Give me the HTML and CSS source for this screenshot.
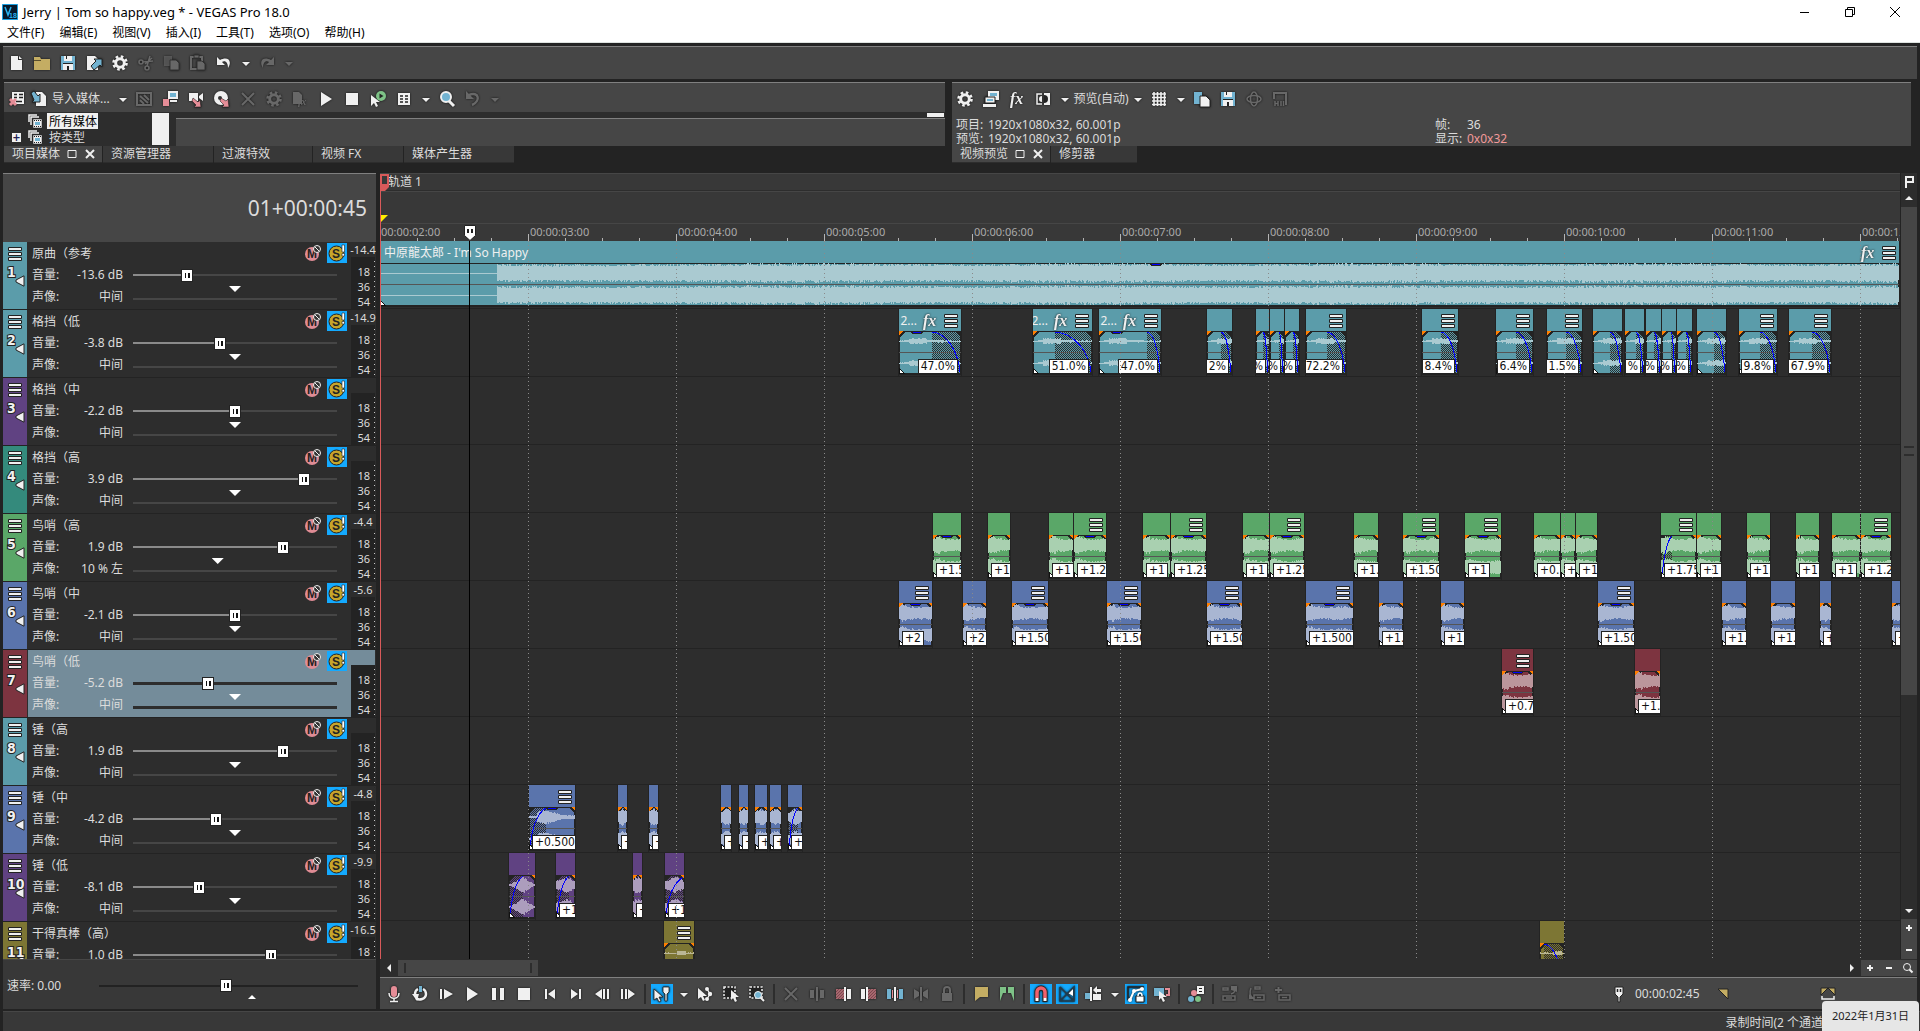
FILE: index.html
```html
<!DOCTYPE html>
<html lang="zh-CN">
<head>
<meta charset="utf-8">
<title>Jerry | Tom so happy.veg * - VEGAS Pro 18.0</title>
<link rel="stylesheet" href="styles.css">
</head>
<body>
<svg class="sprite" aria-hidden="true">
  <symbol id="new" viewBox="0 0 18 18"><path fill="currentColor" d="M4 2h7v4h4v10H4z"/><path fill="currentColor" d="M12 2l3 3h-3z"/></symbol>
  <symbol id="folder" viewBox="0 0 18 18"><path fill="#c4ad63" d="M1 3h6l1 2h9v11H1z"/><path stroke="#5a4f2c" d="M1 6.500h7"/></symbol>
  <symbol id="save" viewBox="0 0 18 18"><path fill="#72b3d1" d="M2 2h14v14H2z"/><path fill="#f0f0f0" d="M5 2h8v5H5zM4 10h10v6H4z"/><path fill="#222" d="M7 2h1v3H7zM8 12h2v4H8zM4 9h10v1H4z"/></symbol>
  <symbol id="render" viewBox="0 0 18 18"><path fill="#f0f0f0" d="M2 2h8l3 3v11H2z"/><path fill="#72b3d1" stroke="#222" d="M6 12l5-5-2-2h8v8l-2-2-6 5z"/></symbol>
  <symbol id="gear" viewBox="0 0 18 18"><circle cx="9" cy="9" r="4.300" fill="none" stroke="currentColor" stroke-width="3"/><circle cx="9" cy="9" r="6.500" fill="none" stroke="currentColor" stroke-width="2.600" stroke-dasharray="2.600 2.500"/></symbol>
  <symbol id="cut" viewBox="0 0 18 18"><g fill="none" stroke="currentColor" stroke-width="1.600"><circle cx="4" cy="8" r="2"/><circle cx="10" cy="14" r="2"/><path d="M6 8l10-1M10 12l3-10M8 10l7-6"/></g></symbol>
  <symbol id="copy" viewBox="0 0 18 18"><path fill="currentColor" opacity=".7" d="M1 2h8v10H1z"/><path fill="currentColor" stroke="#333" d="M7 6h6l3 3v7H7z"/></symbol>
  <symbol id="paste" viewBox="0 0 18 18"><path fill="none" stroke="currentColor" stroke-width="2" d="M2 3h11v12H2z"/><path fill="currentColor" stroke="#333" d="M8 7h5l3 3v6H8zM5 1h5v3H5z"/></symbol>
  <symbol id="undo" viewBox="0 0 18 18"><path fill="currentColor" d="M2 3v8h8L7 8c3-2 6 0 6 6 5-8-1-12-8-8z"/></symbol>
  <symbol id="redo" viewBox="0 0 18 18"><path fill="currentColor" d="M16 3v8H8l3-3c-3-2-6 0-6 6-5-8 1-12 8-8z"/></symbol>
  <symbol id="caret" viewBox="0 0 18 18"><path fill="currentColor" d="M5 8h8l-4 4z"/></symbol>
  <symbol id="offline" viewBox="0 0 18 18"><path fill="#f0f0f0" d="M4 2h12v12H4z"/><path stroke="#222" stroke-width="1.500" d="M6 4.500h3M11 4.500h4M6 7.500h3M11 7.500h4M8 11.500h6"/><path stroke="#e58d97" stroke-width="3" d="M2 9l6 6M8 9l-6 6"/></symbol>
  <symbol id="import" viewBox="0 0 18 18"><path fill="#f0f0f0" d="M6 2h6l4 4v10H6z"/><path fill="#72b3d1" stroke="#222" d="M1 3l3-2 4 5 2-2v8H2l2-2z"/></symbol>
  <symbol id="capture" viewBox="0 0 18 18"><path fill="none" stroke="currentColor" stroke-width="2" d="M2 3h14v12H2z"/><path stroke="currentColor" stroke-width="2" d="M5 6l8 7M9 5l5 5M5 10l4 4"/></symbol>
  <symbol id="screens" viewBox="0 0 18 18"><path fill="#72b3d1" stroke="#f0f0f0" stroke-width="2" d="M8 2h8v6H8z"/><path fill="#f0f0f0" d="M9 10h7v2H9z"/><path fill="#e58d97" d="M2 9h6v7H2z"/></symbol>
  <symbol id="camera" viewBox="0 0 18 18"><path fill="#f0f0f0" d="M2 3h9v8H2zM12 6l4-3v8l-4-3z"/><path fill="#e58d97" stroke="#222" stroke-width=".6" d="M6 8l5 4 2-2 1 7H7l2-2-4-4z"/></symbol>
  <symbol id="disc" viewBox="0 0 18 18"><circle cx="8" cy="8" r="7" fill="#f0f0f0"/><circle cx="7" cy="8" r="2" fill="#333"/><path fill="#e58d97" stroke="#222" stroke-width=".6" d="M8 8l5 3 2-2 1 8H9l2-2-4-4z"/></symbol>
  <symbol id="cross" viewBox="0 0 18 18"><path stroke="currentColor" stroke-width="2" d="M3 3l12 12M15 3L3 15"/></symbol>
  <symbol id="docfx" viewBox="0 0 18 18"><path fill="currentColor" d="M2 2h6l3 3v9H2z"/><text x="7" y="15" class="glyph">fx</text></symbol>
  <symbol id="play" viewBox="0 0 18 18"><path fill="currentColor" d="M4 2l11 7-11 7z"/></symbol>
  <symbol id="stop" viewBox="0 0 18 18"><path fill="currentColor" d="M3 3h12v12H3z"/></symbol>
  <symbol id="autoplay" viewBox="0 0 18 18"><path fill="#f0f0f0" d="M2 5v11l3-3 2 4 2-1-2-4h4z"/><circle cx="12" cy="6" r="5" fill="#7ec287"/><path fill="#222" d="M10.500 3.500l4 2.500-4 2.500z"/></symbol>
  <symbol id="views" viewBox="0 0 18 18"><path fill="currentColor" d="M3 3h12v12H3z"/><path stroke="#222" stroke-width="1.600" d="M5 6h3M10 6h3M5 9h3M10 9h3M5 12h3M10 12h3"/></symbol>
  <symbol id="search" viewBox="0 0 18 18"><path stroke="#f0f0f0" stroke-width="3" d="M11 11l5 5"/><circle cx="8" cy="7" r="5" fill="#72b3d1" stroke="#f0f0f0" stroke-width="2"/></symbol>
  <symbol id="revert" viewBox="0 0 18 18"><path fill="none" stroke="currentColor" stroke-width="2.500" d="M5 5c10-4 12 6 3 10"/><path fill="currentColor" d="M2 1v8h8z"/></symbol>
  <symbol id="monitor" viewBox="0 0 18 18"><path fill="#f0f0f0" d="M6 1h11v9H6z"/><path fill="#72b3d1" d="M8 3h7v3H8z"/><path fill="#f0f0f0" stroke="#222" d="M3 7h10v6H3z"/><path fill="#72b3d1" d="M5 9h6v2H5z"/><path fill="#f0f0f0" d="M1 14h13v3H1z"/></symbol>
  <symbol id="fx" viewBox="0 0 18 18"><text x="2" y="14" class="glyph big">fx</text></symbol>
  <symbol id="split" viewBox="0 0 18 18"><path fill="#f0f0f0" d="M10 3h6v12h-6z"/><path fill="none" stroke="#f0f0f0" stroke-width="1.500" d="M8 4H3v10h5"/><path fill="#f0f0f0" d="M8 6v6a3 3 0 010-6z"/><path fill="#222" d="M10 5v8a4 4 0 000-8z"/></symbol>
  <symbol id="grid" viewBox="0 0 18 18"><path stroke="currentColor" stroke-width="1.600" d="M4 2v14M7.500 2v14M11 2v14M14.500 2v14M2 4h14M2 7.500h14M2 11h14M2 14.500h14"/></symbol>
  <symbol id="snap" viewBox="0 0 18 18"><path fill="#72b3d1" d="M1 2h8v12H1z"/><path fill="#f0f0f0" stroke="#222" d="M7 6h6l4 4v7H7z"/></symbol>
  <symbol id="vr" viewBox="0 0 18 18"><g fill="none" stroke="currentColor" stroke-width="1.600"><ellipse cx="9" cy="9" rx="7" ry="3.500"/><ellipse cx="9" cy="9" rx="3.500" ry="7"/></g></symbol>
  <symbol id="hdr" viewBox="0 0 18 18"><path fill="none" stroke="currentColor" stroke-width="2" d="M3 9V3h12v12"/><path stroke="currentColor" stroke-width="1.500" d="M4 11v5M7 11v5M10 11v5M12.500 11v5M4 13.500h3"/></symbol>
  <symbol id="mic" viewBox="0 0 18 18"><path fill="none" stroke="#f0f0f0" stroke-width="1.500" d="M4 8c0 7 10 7 10 0M9 13v4M5 16.500h8"/><rect x="6" y="1" width="6" height="11" rx="3" fill="#e58d97"/></symbol>
  <symbol id="loop" viewBox="0 0 18 18"><path fill="none" stroke="#f0f0f0" stroke-width="2.500" d="M5 13c3 3 10 1 10-4 0-2-1-4-3-5M4 9c0-3 1-4 3-5"/><path fill="#f0f0f0" d="M1 9h7l-2 7z"/><path fill="#72b3d1" d="M8 1h3v6H8z"/></symbol>
  <symbol id="playstart" viewBox="0 0 18 18"><path fill="currentColor" d="M3 4h2v10H3zM7 4l9 5-9 5z"/></symbol>
  <symbol id="pause" viewBox="0 0 18 18"><path fill="currentColor" d="M3 3h4v12H3zM11 3h4v12h-4z"/></symbol>
  <symbol id="first" viewBox="0 0 18 18"><path fill="currentColor" d="M4 4h2v10H4zM14 4v10L7 9z"/></symbol>
  <symbol id="last" viewBox="0 0 18 18"><path fill="currentColor" d="M12 4h2v10h-2zM4 4v10l7-5z"/></symbol>
  <symbol id="back" viewBox="0 0 18 18"><path fill="currentColor" d="M9 4v10L2 9zM10 4h2v10h-2zM14 4h2v10h-2z"/></symbol>
  <symbol id="fwd" viewBox="0 0 18 18"><path fill="currentColor" d="M9 4v10l7-5zM2 4h2v10H2zM6 4h2v10H6z"/></symbol>
  <symbol id="edit" viewBox="0 0 18 18"><path fill="#f0f0f0" stroke="#222" stroke-width=".8" d="M1 4v11l3-2 2 4 2-1-2-4h4zM10 2h6v5l-2 2v7h-2V9l-2-2z"/></symbol>
  <symbol id="env" viewBox="0 0 18 18"><path fill="#f0f0f0" d="M2 3v11l3-2 2 4 2-1-2-4h4z"/><path fill="none" stroke="#f0f0f0" stroke-width="1.300" d="M11 4l3 5-3 5"/><g fill="#f0f0f0"><circle cx="11" cy="4" r="2"/><circle cx="14" cy="9" r="2.200"/><circle cx="11" cy="14" r="2"/></g></symbol>
  <symbol id="select" viewBox="0 0 18 18"><path fill="#222" stroke="#f0f0f0" stroke-width="1.500" stroke-dasharray="2 1.500" d="M2 2h11v11H2z"/><path fill="#f0f0f0" d="M9 5v10l2-2 2 4 2-1-2-4h4z"/></symbol>
  <symbol id="zoomtool" viewBox="0 0 18 18"><path fill="#222" stroke="#f0f0f0" stroke-width="1.500" stroke-dasharray="2 1.500" d="M2 2h12v11H2z"/><path stroke="#f0f0f0" stroke-width="2" d="M12 12l4 4"/><circle cx="10" cy="10" r="3.500" fill="#72b3d1" stroke="#f0f0f0"/></symbol>
  <symbol id="trim" viewBox="0 0 18 18"><path fill="currentColor" d="M2 5h4v8H2zM12 5h4v8h-4zM8 2h2v14H8z"/></symbol>
  <symbol id="trimstart" viewBox="0 0 18 18"><path fill="#a8676f" d="M2 4h8v10H2z"/><path stroke="#6d4045" stroke-width=".8" d="M2 7l3-3M2 10l6-6M2 13l8-8M4 14l6-6M7 14l3-3"/><path fill="#f0f0f0" d="M10 2h2v14h-2zM13 4h4v10h-4z"/></symbol>
  <symbol id="trimend" viewBox="0 0 18 18"><path fill="#a8676f" d="M8 4h8v10H8z"/><path stroke="#6d4045" stroke-width=".8" d="M8 7l3-3M8 10l6-6M8 13l8-8M10 14l6-6M13 14l3-3"/><path fill="#f0f0f0" d="M6 2h2v14H6zM1 4h4v10H1z"/></symbol>
  <symbol id="splitev" viewBox="0 0 18 18"><path fill="#72b3d1" d="M1 4h4v10H1zM13 4h4v10h-4z"/><path fill="#e58d97" d="M6 5h1v8H6zM11 5h1v8h-1z"/><path fill="#f0f0f0" d="M8 2h2v14H8z"/></symbol>
  <symbol id="mirror" viewBox="0 0 18 18"><path fill="currentColor" d="M2 4l5 3v4l-5 3zM16 4l-5 3v4l5 3zM8 2h2v14H8z"/></symbol>
  <symbol id="lock" viewBox="0 0 18 18"><path fill="none" stroke="currentColor" stroke-width="2" d="M6 9V5a3 3 0 016 0v4"/><path fill="currentColor" d="M4 8h10v8H4z"/></symbol>
  <symbol id="marker" viewBox="0 0 18 18"><path fill="#c4ad63" d="M3 2h13v10H8l-5 4z"/></symbol>
  <symbol id="region" viewBox="0 0 18 18"><path fill="#7ec287" d="M2 2h6v6H5l-3 8zM10 2h6v14l-3-8h-3z"/></symbol>
  <symbol id="magnet" viewBox="0 0 18 18"><path fill="none" stroke="#222" stroke-width="5" d="M5 17V7a4 4 0 018 0v10"/><path fill="none" stroke="#f0616d" stroke-width="3.500" d="M5 13V7a4 4 0 018 0v6"/><path stroke="#fff" stroke-width="3" d="M5 13v3M13 13v3"/></symbol>
  <symbol id="xfade" viewBox="0 0 18 18"><path fill="#fff" d="M15 3v8l-5-3z"/><path fill="none" stroke="#223a4a" stroke-width="1.500" d="M2 2v14h14V2L2 16M2 2l14 14"/></symbol>
  <symbol id="ripple" viewBox="0 0 18 18"><path fill="#72b3d1" d="M1 8h5v6H1z"/><path fill="#f0f0f0" d="M6 2h2v14H6zM9 9h8v6H9zM9 5l4-4v3h4v3h-4v2z"/></symbol>
  <symbol id="envlock" viewBox="0 0 18 18"><path fill="none" stroke="#222" stroke-width="1.500" d="M1 15V2h16"/><path fill="none" stroke="#fff" stroke-width="2" d="M3 15L7 6l8-2"/><g fill="#fff"><circle cx="3" cy="15" r="2"/><circle cx="7" cy="6" r="2"/><circle cx="15" cy="4" r="2"/><path stroke="#222" d="M9 11h8v6H9z"/></g><path fill="none" stroke="#fff" stroke-width="1.500" d="M11 11c0-4 4-4 4 0"/></symbol>
  <symbol id="group" viewBox="0 0 18 18"><path fill="#72b3d1" d="M1 3h10v8H1z"/><path fill="none" stroke="#e58d97" stroke-width="2" d="M12 4h4v6h-3"/><path fill="#f0f0f0" d="M6 6v9l2-2 2 4 2-1-2-4h4z"/></symbol>
  <symbol id="mixer" viewBox="0 0 18 18"><path fill="#f0f0f0" d="M10 1h7v8h-7z"/><path stroke="#222" d="M12 3.500h3M12 6.500h3"/><circle cx="7" cy="8" r="3" fill="#e58d97"/><circle cx="4" cy="14" r="3" fill="#72b3d1"/><circle cx="11" cy="14" r="3" fill="#7ec287"/></symbol>
  <symbol id="sync" viewBox="0 0 18 18"><path fill="none" stroke="currentColor" stroke-width="1.500" d="M2 3h5v2H2zM2 11h12v4H2zM5 13h6M10 9c3-1 4-2 4-6"/><path fill="currentColor" d="M10 5V1h6v6z"/></symbol>
  <symbol id="sync2" viewBox="0 0 18 18"><path fill="none" stroke="currentColor" stroke-width="1.500" d="M4 3C2 8 3 11 6 13M8 2h5v2H8zM7 10h10v5H7zM10 12.500h4"/><path fill="currentColor" d="M2 14V9l6 5z"/></symbol>
  <symbol id="sync3" viewBox="0 0 18 18"><path fill="none" stroke="currentColor" stroke-width="2" d="M2 5h7M5.500 2v6"/><path fill="none" stroke="currentColor" stroke-width="1.500" d="M6 10h11v5H6zM9 12.500h5"/></symbol>
  <symbol id="bars" viewBox="0 0 16 16"><path fill="#f0f0f0" stroke="#222" d="M1.500 1.500h13v3h-13zM1.500 6.500h13v3h-13zM1.500 11.500h13v3h-13z"/></symbol>
  <symbol id="media" viewBox="0 0 16 16"><path fill="none" stroke="#f0f0f0" stroke-width="1.500" d="M2 9V2h8M4 12V4h8"/><path fill="#f0f0f0" stroke="#222" stroke-width=".5" d="M6 6h9v9H6z"/><path fill="#72b3d1" d="M8 9h5v3H8z"/><path stroke="#222" stroke-dasharray="1 1" d="M7 7.500h7M7 13.500h7"/></symbol>
  <symbol id="speaker" viewBox="0 0 10 12"><path fill="#f0f0f0" stroke="#222" d="M9 .8v10.400L1 7V5z"/></symbol>
  <symbol id="mute" viewBox="0 0 18 18"><circle cx="8" cy="10" r="7" fill="#df8c95"/><text x="3" y="14" class="letter">M</text><circle cx="13" cy="5" r="3.500" fill="#333" stroke="#f0f0f0"/><path stroke="#f0f0f0" d="M11 3l4 4"/></symbol>
  <symbol id="solo" viewBox="0 0 18 18"><circle cx="8.500" cy="9.500" r="7.500" fill="#c7a52a" stroke="#222"/><text x="4" y="14" class="letter">S</text><path fill="#fff" stroke="#222" stroke-width=".6" d="M14 1h2.500v7H14zM14 9.500h2.500V12H14z"/></symbol>
  <symbol id="needle" viewBox="0 0 18 18"><path fill="#f0f0f0" stroke="#222" d="M5 2h8v7l-3 3v5H8v-5L5 9z"/><path stroke="#222" stroke-width="1.500" d="M7.500 4v3M10.500 4v3"/></symbol>
  <symbol id="corner" viewBox="0 0 18 18"><path fill="#c4ad63" stroke="#222" d="M4 4h10v10z"/></symbol>
  <symbol id="length" viewBox="0 0 18 18"><path fill="#c4ad63" stroke="#222" d="M2 3h7l-7 7zM16 3H9l7 7z"/><path fill="none" stroke="#f0f0f0" stroke-width="1.500" d="M3 11v3h12v-3"/></symbol>
  <symbol id="left" viewBox="0 0 18 18"><path fill="currentColor" d="M11 5v8L7 9z"/></symbol>
  <symbol id="right" viewBox="0 0 18 18"><path fill="currentColor" d="M7 5v8l4-4z"/></symbol>
  <symbol id="up" viewBox="0 0 18 18"><path fill="currentColor" d="M5 11h8L9 7z"/></symbol>
  <symbol id="plus" viewBox="0 0 18 18"><path stroke="currentColor" stroke-width="2" d="M6 9h6M9 6v6"/></symbol>
  <symbol id="minus" viewBox="0 0 18 18"><path stroke="currentColor" stroke-width="2" d="M6 9h6"/></symbol>
  <symbol id="lens" viewBox="0 0 18 18"><circle cx="8" cy="8" r="3.500" fill="none" stroke="currentColor"/><path stroke="currentColor" stroke-width="2" d="M10.500 10.500l3 3"/></symbol>
  <symbol id="flag" viewBox="0 0 18 18"><path fill="none" stroke="currentColor" stroke-width="2" d="M6 15V4h7v5H6"/></symbol>
</svg>

<header class="titlebar">
  <svg class="logo" viewBox="0 0 16 16"><path fill="#06192b" stroke="#1b9fe0" d="M.5.500h15v15H.5z"/><path fill="none" stroke="#29b3f0" stroke-width="1.500" d="M3 3l3 8 3-8"/><text x="7" y="14" class="logo-num">18</text></svg>
  <h1>Jerry | Tom so happy.veg * - VEGAS Pro 18.0</h1>
  <div class="window-buttons">
    <button aria-label="最小化"><svg viewBox="0 0 12 12"><path d="M1 6.500h9"/></svg></button>
    <button aria-label="还原"><svg viewBox="0 0 12 12"><path d="M1.500 3.500h7v7h-7zM3.500 3.500v-2h7v7h-2"/></svg></button>
    <button aria-label="关闭"><svg viewBox="0 0 12 12"><path d="M1 1l10 10M11 1L1 11"/></svg></button>
  </div>
</header>
<nav class="menubar">
  <button>文件(F)</button><button>编辑(E)</button><button>视图(V)</button><button>插入(I)</button><button>工具(T)</button><button>选项(O)</button><button>帮助(H)</button>
</nav>

<div class="bar main-bar" data-icons="new folder save render gear cut! copy! paste! undo caret redo! caret!"></div>

<section class="docks">
  <div class="dock">
    <div class="panel">
      <div class="bar media-bar">
        <span class="icons" data-icons="offline import"></span>
        <button class="text">导入媒体...</button>
        <span class="icons" data-icons="caret capture! screens camera disc cross! gear! docfx! play stop autoplay views caret search revert! caret!"></span>
      </div>
      <div class="media">
        <ul class="tree">
          <li><i></i><svg><use href="#media"/></svg><b>所有媒体</b></li>
          <li><i class="box">+</i><svg><use href="#media"/></svg><span>按类型</span></li>
        </ul>
        <div class="tree-thumb"></div>
        <div class="media-view"><span></span></div>
      </div>
    </div>
    <div class="tabs">
      <button class="tab on">项目媒体<svg viewBox="0 0 32 12"><path d="M2 2.500h8v7H2z"/><path class="x" d="M20 2l8 8M28 2l-8 8"/></svg></button>
      <button class="tab w110">资源管理器</button><button class="tab w98">过渡特效</button><button class="tab w90">视频 FX</button><button class="tab w110">媒体产生器</button>
    </div>
  </div>
  <div class="dock">
    <div class="panel">
      <div class="bar preview-bar">
        <span class="icons" data-icons="gear monitor fx split caret"></span>
        <button class="text">预览(自动)</button>
        <span class="icons" data-icons="caret grid caret snap save vr! hdr!"></span>
      </div>
      <div class="info">
        <dl><dt>项目:</dt><dd>1920x1080x32, 60.001p</dd><dt>预览:</dt><dd>1920x1080x32, 60.001p</dd></dl>
        <dl><dt>帧:</dt><dd>36</dd><dt>显示:</dt><dd class="warn">0x0x32</dd></dl>
      </div>
    </div>
    <div class="tabs">
      <button class="tab on">视频预览<svg viewBox="0 0 32 12"><path d="M2 2.500h8v7H2z"/><path class="x" d="M20 2l8 8M28 2l-8 8"/></svg></button>
      <button class="tab w86">修剪器</button>
    </div>
  </div>
</section>

<main class="editor">
  <section class="control">
    <div class="clock">01+00:00:45</div>
    <div class="tracks" id="tracks"></div>
    <div class="rate">
      <label for="rate">速率: 0.00</label>
      <input id="rate" type="range" min="0" max="100" value="49">
      <svg class="center"><use href="#up"/></svg>
    </div>
  </section>
  <section class="timeline">
    <div class="canvas">
      <div class="marker-bar"><svg class="flag" viewBox="0 0 9 17"><path fill="#383838" stroke="#d85a5a" stroke-width="2" d="M1 1h7v10H1z"/><path fill="#d85a5a" d="M0 11h9v2l-4 4H0z"/></svg>轨道 1</div>
      <div class="region-bar"><svg viewBox="0 0 8 8"><path fill="#ffee00" d="M0 0h8L0 8z"/></svg></div>
      <div class="ruler" id="ruler"></div>
      <div class="lanes" id="lanes"></div>
      <svg class="playhead" viewBox="0 0 12 16"><path fill="#fff" stroke="#222" d="M.5.500h11v10L6 15.500.5 10.500z"/><path stroke="#222" stroke-width="2" d="M4 4v4M8 4v4"/></svg>
      <div class="playline"></div>
      <div class="start-line"></div>
    </div>
    <div class="vscroll">
      <button class="flag-button" aria-label="标记"><svg><use href="#flag"/></svg></button>
      <svg><use href="#up"/></svg>
      <div class="vthumb"></div>
      <svg><use href="#caret"/></svg>
      <div class="vzoom"><svg><use href="#plus"/></svg><svg><use href="#minus"/></svg></div>
    </div>
    <div class="hscroll">
      <svg><use href="#left"/></svg><div class="hthumb"></div>
      <svg class="end"><use href="#right"/></svg>
      <div class="hzoom"><svg><use href="#plus"/></svg><svg><use href="#minus"/></svg><svg><use href="#lens"/></svg></div>
    </div>
    <div class="bar transport">
      <span class="icons" data-icons="mic loop playstart play pause stop first last back fwd | edit* caret env select zoomtool | cross! trim! trimstart trimend splitev mirror! lock! | marker region | magnet* xfade* ripple caret envlock* group | mixer | sync! sync2! sync3!"></span>
      <span class="position"><svg><use href="#needle"/></svg><span class="time">00:00:02:45</span><svg><use href="#corner"/></svg><svg class="len"><use href="#length"/></svg></span>
    </div>
  </section>
</main>
<footer class="status"><span>录制时间(2 个通道</span></footer>
<div class="tip" role="tooltip">2022年1月31日</div>
<script src="app.js"></script>
</body>
</html>
```
FILE: styles.css
```css
* { box-sizing: border-box; }
body {
  margin: 0; height: 100vh; overflow: hidden; display: flex; flex-direction: column;
  background: #232323; color: #dcdcdc;
  font: 12px/16px "Noto Sans", "Noto Sans CJK SC", sans-serif;
}
button { border: 0; padding: 0; background: none; color: inherit; font: inherit; white-space: nowrap; }
.sprite { display: none; }
.glyph { font: italic 700 10px "Liberation Serif", serif; fill: currentColor; }
.glyph.big { font-size: 16px; }
.letter { font: 700 12px "Liberation Sans", sans-serif; fill: #222; }

.titlebar { flex: none; display: flex; align-items: center; height: 23px; padding-left: 2px; background: #fff; color: #000; }
.logo { width: 16px; height: 16px; margin-right: 5px; }
.logo-num { font: 700 7px "Liberation Sans", sans-serif; fill: #29b3f0; }
.titlebar h1 { margin: 0; flex: 1; font-size: 13px; font-weight: 400; }
.window-buttons { display: flex; padding-right: 3px; }
.window-buttons button { width: 45px; height: 20px; display: grid; place-items: center; }
.window-buttons svg { width: 12px; height: 12px; fill: none; stroke: #000; }
.menubar { flex: none; display: flex; gap: 15px; height: 20px; padding: 0 7px; background: #fff; color: #000; border-bottom: 1px solid #dde3e0; }

.bar { display: flex; align-items: center; background: #464646; border-top: 1px solid #808080; }
.icons { display: flex; align-items: center; }
.icon { flex: none; width: 26px; height: 26px; display: grid; place-items: center; color: #f0f0f0; }
.icon svg { width: 18px; height: 18px; filter: drop-shadow(0 0 1px #111); }
.icon.off { color: #686868; }
.icon.on { background: #14aaff; width: 22px; height: 20px; margin: 0 2px; }
.icon.caret { width: 17px; }
.sep { width: 2px; height: 20px; margin: 0 3px; background: #2d2d2d; }
.main-bar { flex: none; height: 33px; margin: 3px 3px 0; }

.docks { flex: none; display: grid; grid-template-columns: 941fr 959fr; gap: 7px; margin: 3px 9px 0 4px; }
.panel { height: 64px; background: #464646; }
.media-bar, .preview-bar { height: 30px; padding-top: 2px; }
.media-bar .icon:first-child { margin-right: -4px; }
.media-bar .icons + .text + .icons .icon:first-child { margin-right: 0; }
.media-bar .text { width: 62px; text-align: left; }
.preview-bar .text { width: 56px; }
.media { display: grid; grid-template-columns: 148px 17px 1fr; height: 34px; background: #2d2d2d; }
.tree { margin: 0; padding: 1px 0 0 8px; list-style: none; }
.tree li { display: flex; align-items: center; height: 16px; gap: 4px; }
.tree i { width: 9px; }
.tree .box { height: 9px; background: #f0f0f0; color: #225; font: 700 10px/9px "DejaVu Sans", sans-serif; text-align: center; }
.tree svg { width: 16px; height: 16px; margin-left: 2px; }
.tree b { font-weight: 400; background: #f0f0f0; color: #000; padding: 1px 1px 0 2px; line-height: 15px; }
.tree span { padding: 1px 0 0 2px; }
.tree-thumb { background: #f0f0f0; height: 32px; margin-top: 1px; }
.media-view { margin: 6px 0 0 7px; background: #464646; border-top: 1px solid #808080; position: relative; }
.media-view span { position: absolute; right: 1px; top: -6px; width: 17px; height: 4px; background: #f0f0f0; }
.tabs { display: flex; gap: 1px; height: 17px; }
.tab { background: #383838; text-align: left; padding-left: 8px; line-height: 14px; border-bottom: 1px solid #2d2d2d; }
.tab.on { background: #464646; width: 98px; }
.tab svg { width: 32px; height: 12px; margin-left: 6px; vertical-align: -2px; fill: none; stroke: #f0f0f0; stroke-width: 1; }
.tab .x { stroke-width: 2; }
.w110 { width: 110px; } .w98 { width: 98px; } .w90 { width: 90px; } .w86 { width: 86px; }
.info { display: grid; grid-template-columns: 480fr 473fr; padding: 6px 4px 0; line-height: 14px; }
.info dl { display: grid; grid-template-columns: 32px 1fr; margin: 0; align-content: start; }
.info dt { white-space: nowrap; }
.info dd { margin: 0; }
.info .warn { color: #f39a9a; }

.editor { flex: 1; min-height: 0; display: grid; grid-template-columns: 373px 1fr; gap: 4px; margin: 10px 3px 0; }
.control { min-height: 0; display: flex; flex-direction: column; }
.clock { flex: none; height: 69px; padding: 24px 9px 0 0; background: #464646; border-top: 1px solid #808080; font-size: 21px; line-height: 20px; text-align: right; }
.tracks { flex: 1; min-height: 0; overflow: hidden; }
.rate { flex: none; position: relative; height: 50px; background: #383838; border-top: 1px solid #464646; display: grid; grid-template-columns: 92px 259px; padding: 2px 0 0 4px; align-items: center; }
.rate .center { position: absolute; left: 240px; bottom: 3px; width: 18px; height: 18px; color: #fff; }

.track { display: grid; grid-template-columns: 24px 324px 24px; height: 67px; margin-bottom: 1px; background: #2d2d2d; }
.strip { position: relative; background: var(--c); }
.strip .menu { display: block; width: 16px; height: 16px; margin: 4px 0 0 4px; }
.strip .speaker { position: absolute; left: 12px; top: 33px; width: 10px; height: 12px; }
.strip b { position: absolute; left: 4px; top: 21px; font: 700 14px/18px "DejaVu Sans Condensed", sans-serif; color: #f0f0f0; -webkit-text-stroke: 2px #222; paint-order: stroke fill; }
.track-body { margin-left: 1px; padding-left: 4px; }
.line { display: grid; grid-template-columns: 40px 51px 204px; height: 22px; align-items: center; }
.line output { text-align: right; white-space: nowrap; }
.line input { margin-left: 10px; }
.name { display: flex; height: 22px; align-items: center; gap: 4px; padding-right: 4px; }
.name span { flex: 1; padding-top: 1px; }
.name button { width: 20px; height: 20px; display: grid; place-items: center; }
.name svg { width: 18px; height: 18px; }
.name .solo { background: #14aaff; }
.meter { background: #232323; font-size: 11px; text-align: right; padding-right: 5px; position: relative; }
.meter b { height: 15px; margin: 0 -5px 7px 0; font-weight: 400; line-height: 15px; background: #2d2d2d; display: flex; justify-content: center; }
.meter::after { content: ""; position: absolute; right: 0; top: 19px; bottom: 0; width: 1px; background: repeating-linear-gradient(#c8c8c8 0 1px, transparent 1px 5px); }
.meter span { display: block; height: 15px; line-height: 15px; }
.track.selected .track-body, .track.selected .meter b { background: #748c9a; }

input[type=range] {
  -webkit-appearance: none; appearance: none; width: 204px; height: 14px; outline: 0;
  background: linear-gradient(90deg, #8a8a8a var(--p, 0%), #464646 var(--p, 0%)) 0 6px / 100% 2px no-repeat;
}
input[type=range]::-webkit-slider-thumb {
  -webkit-appearance: none; width: 12px; height: 13px; border: 1px solid #222;
  background: linear-gradient(90deg, #fff 3px, #111 3px 4px, #fff 4px 6px, #111 6px 8px, #fff 8px) 0 3px / 10px 5px no-repeat #fff;
}
input.pan { height: 16px; background: linear-gradient(#464646, #464646) 0 9px / 100% 2px no-repeat; }
input.pan::-webkit-slider-thumb { height: 6px; width: 12px; margin-top: -11px; border: 0; background: #fff; clip-path: polygon(0 0, 100% 0, 50% 100%); }
.selected input[type=range] { background-image: linear-gradient(#2d2d2d, #2d2d2d); background-size: 100% 3px; }
#rate { width: 259px; background-image: linear-gradient(#222, #222); margin: 0; }

.timeline { min-width: 0; min-height: 0; display: grid; grid-template: 1fr 18px 32px / 1fr 16px; column-gap: 1px; }
.canvas { position: relative; overflow: hidden; display: flex; flex-direction: column; background: #2d2d2d; }
.marker-bar { flex: none; height: 17px; padding-left: 8px; background: #383838; border-top: 1px solid #464646; position: relative; line-height: 15px; }
.flag { position: absolute; left: 0; top: 0; width: 9px; height: 17px; }
.region-bar { flex: none; height: 32px; margin-top: 1px; background: #383838; border-top: 1px solid #464646; display: flex; align-items: flex-end; }
.region-bar svg { width: 8px; height: 8px; }
.ruler { flex: none; height: 18px; background: #383838; border-top: 1px solid #464646; position: relative; font-size: 11px; color: #aaa; }
.ruler span { position: absolute; top: 0; line-height: 16px; padding-left: 2px; white-space: nowrap; }
.ruler i { position: absolute; bottom: 0; width: 1px; height: 3px; background: #b4b4b4; }
.ruler i.major { height: 7px; }
.lanes { flex: 1; position: relative; overflow: hidden; }
.lane { position: relative; height: 68px; border-bottom: 1px solid #232323; }
.clip { position: absolute; top: 0; height: 67px; overflow: hidden; border: 1px solid #232323; border-width: 0 1px; }
.clip header { display: flex; align-items: center; justify-content: flex-end; gap: 4px; height: 22px; padding: 2px 2px 0; background: var(--c); color: #f0f0f0; }
.clip header span { flex: 1; padding-left: 2px; white-space: nowrap; }
.clip header svg { flex: none; width: 16px; height: 16px; }
.clip header .fx { width: 18px; height: 18px; filter: drop-shadow(0 0 1px #111); }
.clip .wave { display: block; width: 100%; height: 44px; }
.clip em { position: absolute; top: 50px; height: 15px; padding: 0 2px; background: #fff; border: 1px solid #222; color: #111; font: 12px/13px "DejaVu Sans Condensed", sans-serif; }
.clip em.pitch { left: 3px; }
.clip em.pct { right: 3px; }
.second { position: absolute; top: 0; bottom: 0; width: 1px; background: repeating-linear-gradient(#8a8a8a 0 1px, transparent 1px 4px); }
.playhead { position: absolute; left: 84px; top: 52px; width: 12px; height: 16px; }
.playline { position: absolute; left: 89px; top: 68px; bottom: 0; width: 1px; background: #000; }
.start-line { position: absolute; left: 0; top: 17px; bottom: 0; width: 1px; background: #d85a5a; }

.vscroll { display: flex; flex-direction: column; align-items: center; background: #2d2d2d; }
.vscroll svg, .hscroll svg { flex: none; width: 18px; height: 18px; color: #f0f0f0; }
.flag-button { height: 16px; }
.vthumb { flex: 1; width: 16px; background: #464646; margin-bottom: 206px; display: grid; place-items: center; }
.vthumb::before { content: ""; width: 10px; height: 6px; border: 2px solid #2d2d2d; border-width: 2px 0; }
.vzoom { width: 16px; height: 40px; background: #464646; display: flex; flex-direction: column; justify-content: space-between; align-items: center; }
.hscroll { grid-column: 1 / 3; display: flex; align-items: center; background: #2d2d2d; }
.hthumb { width: 140px; height: 16px; background: #464646; display: flex; justify-content: space-between; padding: 3px 6px; }
.hthumb::before, .hthumb::after { content: ""; width: 2px; background: #2d2d2d; }
.hscroll .end { margin-left: auto; }
.hzoom { width: 56px; height: 16px; display: flex; align-items: center; justify-content: space-between; background: #464646; }
.transport { grid-column: 1 / 3; justify-content: space-between; padding-left: 1px; }
.position { display: flex; align-items: center; width: 307px; gap: 7px; }
.position svg { width: 18px; height: 18px; }
.position .time { width: 72px; }
.position .len { margin-left: 80px; }

.status { flex: none; height: 20px; margin: 2px 0 0 3px; background: #383838; border-top: 1px solid #464646; display: flex; justify-content: flex-end; }
.status span { padding: 3px 97px 0 0; line-height: 16px; }
.tip { position: absolute; right: 1px; bottom: 0; width: 97px; height: 30px; border-radius: 4px 4px 0 0; background: #e6e6e6; color: #222; font-size: 11px; line-height: 30px; text-align: center; }
```
FILE: app.js
```js
// Icon rows: "!" marks a disabled button, "*" an active one, "|" a divider.
document.querySelectorAll('[data-icons]').forEach(row => {
  row.insertAdjacentHTML('beforeend', row.dataset.icons.split(' ').map(token => {
    if (token === '|') return '<span class="sep"></span>';
    const id = token.replace(/[!*]/, '');
    const cls = ['icon', id === 'caret' ? 'caret' : '', token.endsWith('!') ? 'off' : '', token.endsWith('*') ? 'on' : ''].join(' ');
    return `<button class="${cls}" aria-label="${id}"><svg><use href="#${id}"/></svg></button>`;
  }).join(''));
});

const TEAL = '#5b9caa', PURPLE = '#604282', GREEN = '#5aa768', BLUE = '#5a74ac', RED = '#7d3440', OLIVE = '#7d7634';
// name, colour, volume, slider position, peak
const tracks = [
  ['原曲（参考', TEAL, '-13.6 dB', 25, '-14.4'],
  ['格挡（低', TEAL, '-3.8 dB', 42, '-14.9'],
  ['格挡（中', PURPLE, '-2.2 dB', 50, ''],
  ['格挡（高', '#348a7c', '3.9 dB', 86, ''],
  ['鸟哨（高', GREEN, '1.9 dB', 75, '-4.4'],
  ['鸟哨（中', BLUE, '-2.1 dB', 50, '-5.6'],
  ['鸟哨（低', RED, '-5.2 dB', 36, ''],
  ['锤（高', TEAL, '1.9 dB', 75, ''],
  ['锤（中', BLUE, '-4.2 dB', 40, '-4.8'],
  ['锤（低', PURPLE, '-8.1 dB', 31, '-9.9'],
  ['干得真棒（高）', OLIVE, '1.0 dB', 69, '-16.5']
];
document.getElementById('tracks').innerHTML = tracks.map(([name, color, vol, pos, peak], i) => `
  <div class="track${i === 6 ? ' selected' : ''}" style="--c:${color}">
    <div class="strip"><svg class="menu"><use href="#bars"/></svg><svg class="speaker"><use href="#speaker"/></svg><b>${i + 1}</b></div>
    <div class="track-body">
      <div class="name"><span>${name}</span><button aria-label="静音"><svg><use href="#mute"/></svg></button><button class="solo" aria-label="独奏"><svg><use href="#solo"/></svg></button></div>
      <div class="line"><label for="vol${i}">音量:</label><output>${vol}</output><input id="vol${i}" type="range" value="${pos}" style="--p:${pos}%"></div>
      <div class="line"><label for="pan${i}">声像:</label><output>${i === 4 ? '10 % 左' : '中间'}</output><input class="pan" id="pan${i}" type="range" value="${i === 4 ? 41 : 50}"></div>
    </div>
    <div class="meter"><b>${peak}</b><span>18</span><span>36</span><span>54</span></div>
  </div>`).join('');

const SECOND = 148;
const ruler = document.getElementById('ruler');
for (let s = 0; s < 11; s++) {
  const x = s * SECOND;
  let html = `<span style="left:${s ? x : -1}px">00:00:${String(s + 2).padStart(2, '0')}:00</span>`;
  for (let q = 0; q < 4; q++) html += `<i class="${q ? '' : 'major'}" style="left:${x + q * 37}px"></i>`;
  ruler.insertAdjacentHTML('beforeend', html);
}

// Clips per track: start, end, label, flags
// m = menu, n = gain notch, o<x> = fade out from x, i<x> = fade in up to x, f = titled with effects
const clips = {
  0: [[0,1520,'','t m n']],
  1: [[519,582,'47.0%','f m n o552'],[653,713,'51.0%','f m o675'],[719,782,'47.0%','f m n o767'],[827,853,'2%','o841'],[876,890,'%','o883'],[890,905,'%','o899'],[905,920,'%','o913'],[926,967,'72.2%','m o947'],[1042,1079,'8.4%','m o1061'],[1116,1154,'6.4%','m o1136'],[1167,1203,'1.5%','m o1186'],[1213,1243,'','o1230'],[1245,1265,'%','o1256'],[1266,1282,'%','o1274'],[1282,1297,'%','o1291'],[1297,1313,'%','o1306'],[1317,1347,'','o1334'],[1359,1398,'9.8%','m o1380'],[1409,1452,'67.9%','m o1432']],
  4: [[553,582,'+1.5','n'],[608,631,'+1.',''],[669,694,'+1',''],[694,727,'+1.25','m n'],[763,791,'+1',''],[791,827,'+1.25','m n'],[863,890,'+1',''],[890,925,'+1.25','m n'],[974,999,'+1.',''],[1023,1060,'+1.50','m n'],[1085,1122,'+1','m n'],[1154,1181,'+0.7',''],[1181,1196,'+1',''],[1196,1218,'+1',''],[1281,1317,'+1.75','m i1292'],[1317,1342,'+1',''],[1367,1391,'+1.',''],[1416,1440,'+1.',''],[1452,1481,'+1',''],[1481,1512,'+1.25','m n']],
  5: [[519,553,'+2','m n'],[583,607,'+2',''],[632,669,'+1.50','m n'],[727,762,'+1.50','m n'],[827,863,'+1.50','m n'],[926,974,'+1.500','m n'],[999,1024,'+1.',''],[1061,1085,'+1.',''],[1218,1255,'+1.50','m n'],[1342,1367,'+1.',''],[1391,1416,'+1.',''],[1440,1452,'+1',''],[1512,1530,'+1','']],
  6: [[1122,1154,'+0.7','m n'],[1255,1281,'+1.','']],
  8: [[149,196,'+0.500','m n i166'],[238,248,'+1',''],[269,279,'+1',''],[341,352,'+1',''],[359,369,'+1',''],[375,388,'+1',''],[390,402,'+1',''],[408,423,'+1','i418']],
  9: [[129,156,'','i143'],[176,196,'+1','i189'],[253,263,'+1',''],[285,305,'+1','i305']],
  10: [[284,315,'','m'],[1160,1185,'','o1164']]
};

const mix = hex => '#' + [1, 3, 5].map(k => Math.round(parseInt(hex.substr(k, 2), 16) * .5 + 124).toString(16)).join('');
function noise(seed) { let s = seed * 7919 + 17; return () => (s = (s * 16807) % 2147483647) / 2147483647; }

function channel(w, mid, amp, seed) {
  const rnd = noise(seed);
  let d = '';
  for (let x = 0; x < w; x++) {
    const a = Math.max(.5, amp(x) * (.72 + rnd() * .28));
    const b = Math.max(.5, amp(x) * (.72 + rnd() * .28));
    d += `M${x} ${(mid - a).toFixed(1)}h1V${(mid + b).toFixed(1)}h-1z`;
  }
  return d;
}
function envelope(row, w) {
  if (row === 0) return x => x < 117 ? .5 : x < 240 ? 9 : 9 + Math.abs(Math.sin(x / 90));
  if (row === 1) return x => x > 9 && x < 28 ? 3 : x > 4 && x < 45 ? 1.5 : .6;
  if (row === 8 || row === 9) return w > 40 ? x => x < 8 ? 1 : Math.max(2, 8 - Math.abs(x - 16) / 3) : x => Math.max(1, 9 - Math.abs(x - w * .5) * (w > 22 ? .7 : .5));
  if (row === 10) return x => x > 12 && x < 22 ? 2 : .6;
  return x => 7 + (x < 7 ? 1.5 : 0) + Math.sin(x / 4) * .7;
}
function body(row, w, color, flags, start) {
  const amp = envelope(row, w), light = mix(color);
  const cut = row ? 5 : 0;
  let under = '', over = '';
  for (const f of flags) {
    const at = Number(f.slice(1)) - start;
    if (f[0] === 'o') {
      under += `<path fill="url(#dots)" d="M${at} 1H${w - 5}l4 5V42H${at}z"/>`;
      over += `<path stroke="#111" d="M${at}.500V42"/><path fill="none" stroke="#00f" d="M${at} 1C${at + (w - at) * .5} 2 ${w - 3} 20 ${w - 1} 41"/>`;
    }
    if (f[0] === 'i') {
      under += `<path fill="url(#dots)" d="M0 6l5-5H${at}V42H0z"/>`;
      over += `<path stroke="#111" d="M${at}.500V42"/><path fill="none" stroke="#00f" d="M1 41C3 20 ${at * .5} 6 ${at} 1"/>`;
    }
  }
  const fadeIn = flags.some(f => f[0] === 'i'), fadeOut = flags.some(f => f[0] === 'o');
  let s = `<rect width="${w}" height="44" fill="#232323"/><path fill="${color}" d="M1 ${cut + 1}L${cut + 1} 1H${w - 1 - cut}L${w - 1} ${cut + 1}V42H1z"/>${under}`;
  s += `<path fill="${light}" d="${channel(w, 10, amp, start + 1)}${channel(w, 32, amp, start + 1)}"/>`;
  s += `<path stroke="#555" d="M0 21.500h${w}"/>${over}`;
  if (row && !fadeIn) s += '<path fill="#ff7f00" d="M0 0h4L0 4z"/>';
  if (row && !fadeOut) s += `<path fill="#ff7f00" d="M${w} 0h-4l4 4z"/>`;
  if (flags.includes('n')) { const c = row === 1 ? 18 : row ? w / 2 : 776; s += `<path fill="#00f" stroke="#222" d="M${c - 7} 0h14l-3 2.500h-8z"/>`; }
  return s + '<path fill="#fff" stroke="#111" d="M0 37v5h5z"/>';
}
function clip(row, [start, end, label, flagText]) {
  const flags = flagText.split(' ').filter(Boolean), w = end - start - 1, color = tracks[row][1];
  const fx = '<svg class="fx"><use href="#fx"/></svg>';
  const head = (flags.includes('f') ? '<span>2...</span>' + fx : '') + (flags.includes('t') ? "<span>中原龍太郎 - I'm So Happy</span>" + fx : '') + (flags.includes('m') ? '<svg><use href="#bars"/></svg>' : '');
  const tag = label ? `<em class="${label.includes('%') ? 'pct' : 'pitch'}">${label}</em>` : '';
  return `<div class="clip" style="left:${start - 1}px;width:${end - start + 1}px;--c:${color}"><header>${head}</header><svg class="wave" viewBox="0 0 ${w} 44" shape-rendering="crispEdges">${body(row, w, color, flags, start)}</svg>${tag}</div>`;
}
let lanes = '<svg width="0" height="0" style="position:absolute"><pattern id="dots" width="2" height="2" patternUnits="userSpaceOnUse"><path fill="#2d2d2d" d="M0 0h1v1H0zM1 1h1v1H1z"/></pattern></svg>';
lanes += tracks.map((t, i) => `<div class="lane">${(clips[i] || []).map(c => clip(i, c)).join('')}</div>`).join('');
for (let s = 1; s < 11; s++) lanes += `<i class="second" style="left:${s * SECOND}px"></i>`;
document.getElementById('lanes').innerHTML = lanes;
```
